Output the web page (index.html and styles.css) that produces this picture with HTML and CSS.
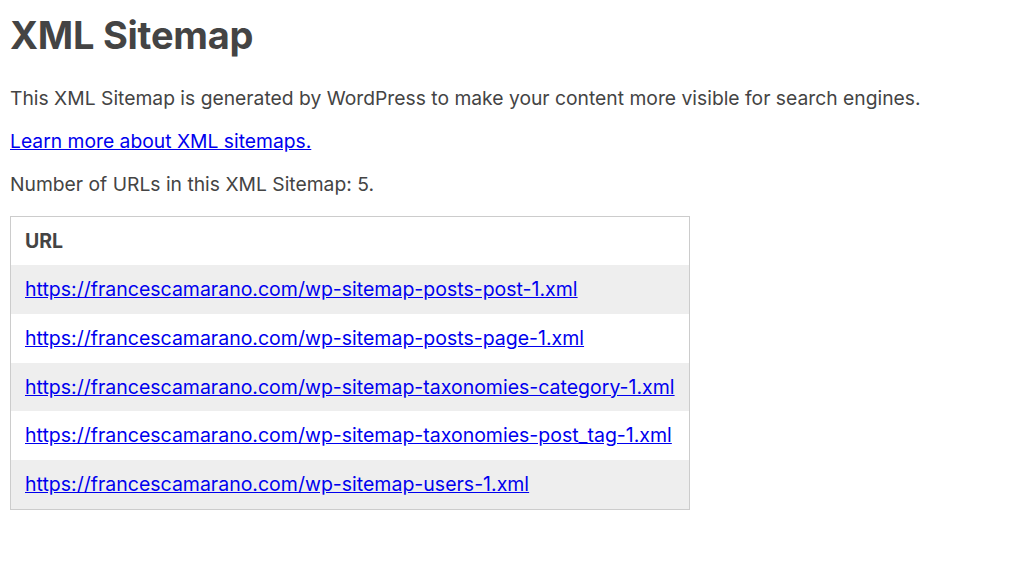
FILE: index.html
```html
<!DOCTYPE html>
<html lang="en">
<head>
<meta charset="utf-8">
<title>XML Sitemap</title>
<link rel="stylesheet" href="styles.css">
</head>
<body>
<div class="sitemap">
  <div class="sitemap-header">
    <h1 class="title">XML Sitemap</h1>
    <p class="text">This XML Sitemap is generated by WordPress to make your content more visible for search engines.</p>
    <p class="text"><a class="link" href="#">Learn more about XML sitemaps.</a></p>
  </div>
  <div class="sitemap-content">
    <p class="text count">Number of URLs in this XML Sitemap: 5.</p>
    <table class="sitemap-table">
      <thead>
        <tr><th class="cell head">URL</th></tr>
      </thead>
      <tbody>
        <tr class="row odd"><td class="cell"><a class="link" href="#">https://francescamarano.com/wp-sitemap-posts-post-1.xml</a></td></tr>
        <tr class="row"><td class="cell"><a class="link" href="#">https://francescamarano.com/wp-sitemap-posts-page-1.xml</a></td></tr>
        <tr class="row odd"><td class="cell"><a class="link" href="#">https://francescamarano.com/wp-sitemap-taxonomies-category-1.xml</a></td></tr>
        <tr class="row"><td class="cell"><a class="link" href="#">https://francescamarano.com/wp-sitemap-taxonomies-post_tag-1.xml</a></td></tr>
        <tr class="row odd"><td class="cell"><a class="link" href="#">https://francescamarano.com/wp-sitemap-users-1.xml</a></td></tr>
      </tbody>
    </table>
  </div>
</div>
</body>
</html>
```

FILE: styles.css
```css
html, body {
  margin: 0;
  padding: 0;
  background: #fff;
}

body {
  font-family: Inter, Roboto, "Noto Sans", sans-serif;
  color: #444;
  padding: 0 10px;
}

.title {
  font-size: 38px;
  line-height: 46px;
  font-weight: 700;
  margin: 12px 0 28px;
  letter-spacing: -0.25px;
}

.text {
  font-size: 19.3px;
  line-height: 24px;
  margin: 0 0 19px;
}

.count {
  margin-bottom: 20px;
}

.link {
  color: #0000ee;
  text-decoration: underline;
}

.sitemap-table {
  width: 680px;
  border: 1px solid #ccc;
  border-collapse: collapse;
  font-size: 19.5px;
}

.cell {
  padding: 12px 14px;
  line-height: 24.8px;
  text-align: left;
}

.head {
  font-weight: 700;
  line-height: 24px;
}

.row.odd .cell {
  background: #eee;
}
```
